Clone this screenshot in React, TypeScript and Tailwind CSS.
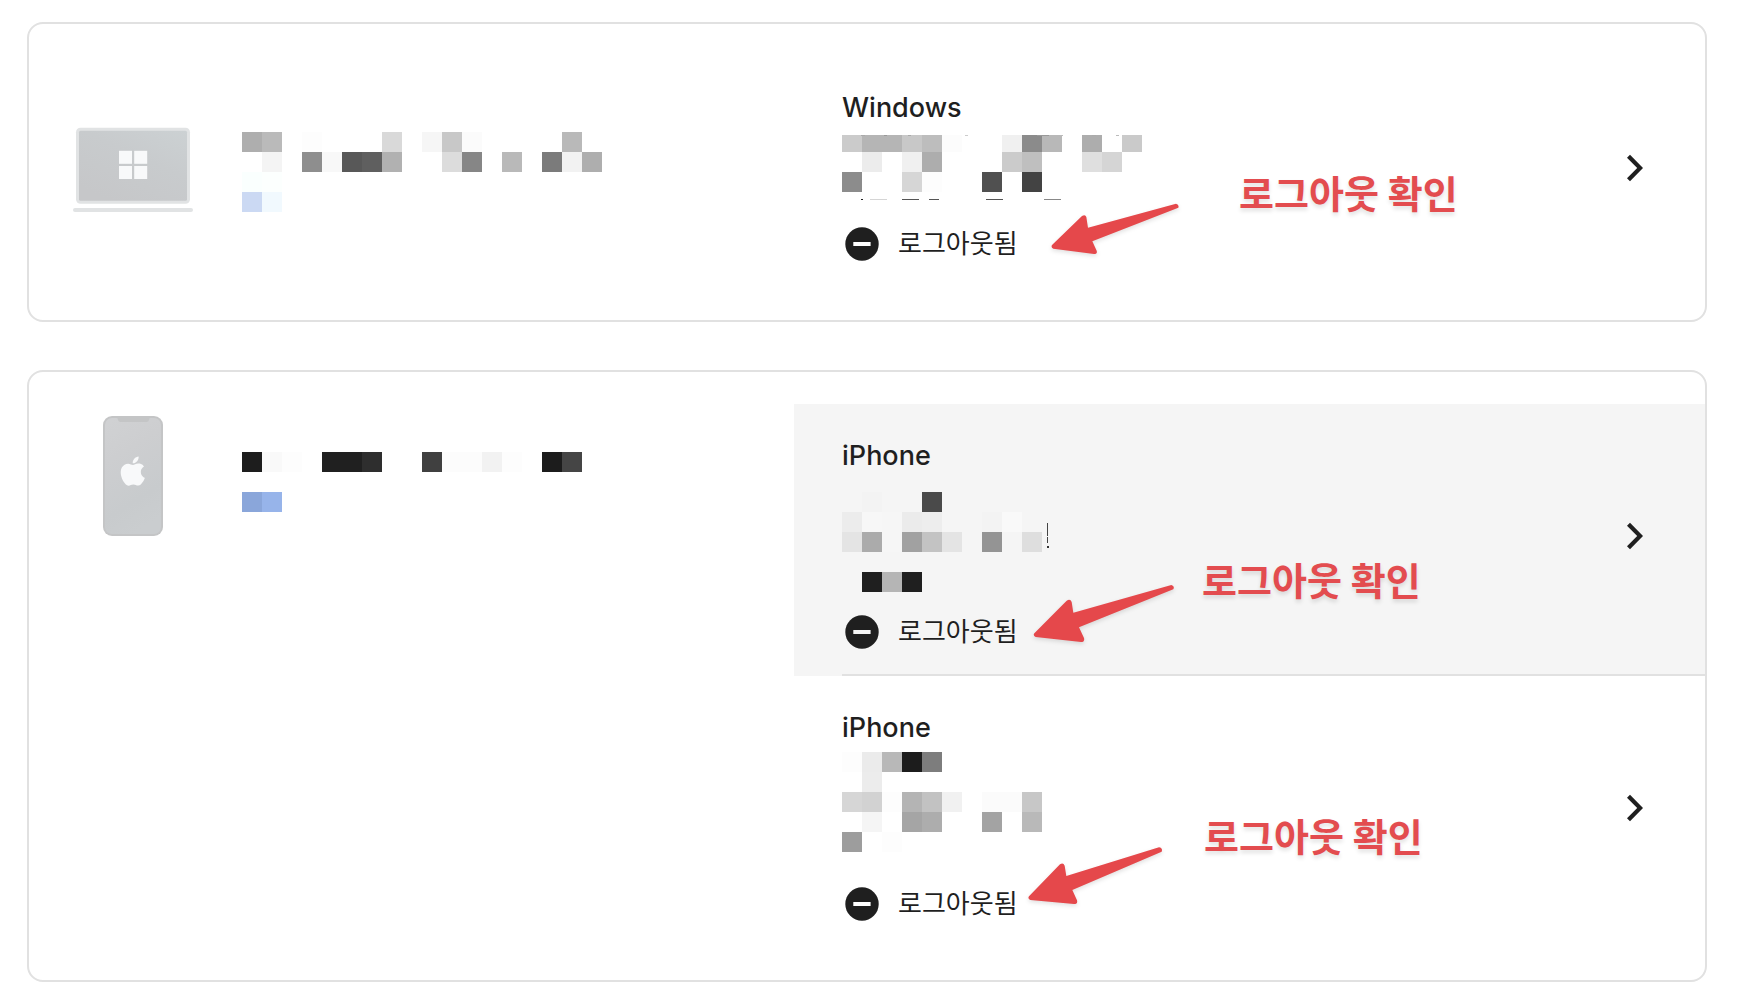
type Cell = [col: number, row: number, color: string];
type Mark = [x: number, y: number, width: number, height: number, color: string];

interface MosaicProps {
  label: string;
  cells: Cell[];
  marks?: Mark[];
  top: number;
  width: number;
  height: number;
}

interface Session {
  name: string;
  active: boolean;
  divider: boolean;
  mosaic: MosaicProps;
  arrow: { className: string; viewBox: string; width: number; height: number; path: string };
  noteClass: string;
}

const CELL = 20;

const windowsDevice: Cell[] = [
  [0, 0, "#aeaeae"], [1, 0, "#bababa"], [3, 0, "#fdfdfd"], [7, 0, "#d9d9d9"], [9, 0, "#f6f6f6"],
  [10, 0, "#c8c8c8"], [11, 0, "#fbfbfb"], [16, 0, "#b9b9b9"],
  [1, 1, "#f4f4f4"], [3, 1, "#8e8e8e"], [4, 1, "#f8f8f8"], [5, 1, "#585858"], [6, 1, "#5f5f5f"],
  [7, 1, "#b1b1b1"], [10, 1, "#dcdcdc"], [11, 1, "#868686"], [13, 1, "#b9b9b9"], [15, 1, "#7b7b7b"],
  [16, 1, "#f2f2f2"], [17, 1, "#aeaeae"],
  [0, 2, "#fafffe"], [1, 2, "#fcfffe"],
  [0, 3, "#cbd9f3"], [1, 3, "#f1f9fe"],
];

const phoneDevice: Cell[] = [
  [0, 0, "#1d1d1d"], [1, 0, "#f9f9f9"], [2, 0, "#fdfdfd"], [4, 0, "#202020"], [5, 0, "#202020"],
  [6, 0, "#2e2e2e"], [9, 0, "#404040"], [10, 0, "#fcfcfc"], [11, 0, "#fcfcfc"], [12, 0, "#f2f2f2"],
  [13, 0, "#fdfdfd"], [15, 0, "#1c1c1c"], [16, 0, "#454545"],
  [0, 2, "#8aa6da"], [1, 2, "#97b4ea"],
];

const windowsSessions: Session[] = [
  {
    name: "Windows",
    active: false,
    divider: false,
    mosaic: {
      label: "세션 정보",
      top: 6,
      width: 320,
      height: 98,
      cells: [
        [0, 0, "#cbcbcb"], [1, 0, "#b5b5b5"], [2, 0, "#b5b5b5"], [3, 0, "#c8c8c8"], [4, 0, "#bdbdbd"],
        [5, 0, "#fcfcfc"], [8, 0, "#f0f0f0"], [9, 0, "#8b8b8b"], [10, 0, "#b8b8b8"], [12, 0, "#adadad"],
        [14, 0, "#cacaca"],
        [1, 1, "#ececec"], [3, 1, "#f0f0f0"], [4, 1, "#adadad"], [8, 1, "#cbcbcb"], [9, 1, "#bfbfbf"],
        [12, 1, "#dfdfdf"], [13, 1, "#d5d5d5"],
        [0, 2, "#8c8c8c"], [3, 2, "#d6d6d6"], [4, 2, "#fdfdfd"], [7, 2, "#505050"], [9, 2, "#434343"],
      ],
      marks: [
        [0, 0, 320, 3, "#ffffff"],
        [19, 3, 4, 1, "#aaaaaa"], [42, 3, 3, 1, "#999999"], [66, 3, 3, 1, "#aaaaaa"],
        [123, 3, 3, 1, "#cccccc"], [195, 3, 12, 1, "#999999"], [218, 3, 3, 1, "#bbbbbb"],
        [250, 3, 4, 1, "#aaaaaa"], [274, 3, 3, 1, "#bbbbbb"],
        [19, 67, 2, 1, "#222222"], [28, 67, 17, 1, "#d5d5d5"], [60, 67, 17, 1, "#555555"],
        [87, 67, 10, 1, "#555555"], [144, 67, 17, 1, "#555555"], [202, 67, 17, 1, "#888888"],
      ],
    },
    arrow: {
      className: "absolute left-[253px] top-[144px]",
      viewBox: "681 360 408 180",
      width: 136,
      height: 60,
      path: "M696 495L786 408Q796 402 799 411L804 443L1068 371Q1078 373 1075 383L817 484L830 512Q833 522 822 522L700 506Q692 502 696 495Z",
    },
    noteClass: "left-[445px] top-[110px]",
  },
];

const phoneSessions: Session[] = [
  {
    name: "iPhone",
    active: true,
    divider: true,
    mosaic: {
      label: "세션 정보",
      top: 18,
      width: 320,
      height: 138,
      cells: [
        [1, 0, "#f3f3f3"], [4, 0, "#4a4a4a"],
        [0, 1, "#ececec"], [1, 1, "#f7f7f7"], [2, 1, "#f6f6f6"], [3, 1, "#ebebeb"], [4, 1, "#ededed"],
        [7, 1, "#f3f3f3"], [8, 1, "#f9f9f9"],
        [0, 2, "#e4e4e4"], [1, 2, "#ababab"], [2, 2, "#f6f6f6"], [3, 2, "#a1a1a1"], [4, 2, "#c3c3c3"],
        [5, 2, "#e4e4e4"], [7, 2, "#949494"], [9, 2, "#dedede"],
        [1, 4, "#1f1f1f"], [2, 4, "#b5b5b5"], [3, 4, "#1f1f1f"],
      ],
      marks: [
        [205, 31, 1, 13, "#444444"], [205, 45, 1, 6, "#444444"], [205, 54, 2, 2, "#333333"],
      ],
    },
    arrow: {
      className: "absolute left-[236px] top-[176px]",
      viewBox: "750 570 444 204",
      width: 148,
      height: 68,
      path: "M763 730L860 632Q871 625 875 636L880 668L1174 585Q1185 588 1180 598L897 712L912 744Q915 756 903 756L767 741Q758 737 763 730Z",
    },
    noteClass: "left-[408px] top-[149px]",
  },
  {
    name: "iPhone",
    active: false,
    divider: false,
    mosaic: {
      label: "세션 정보",
      top: 6,
      width: 320,
      height: 138,
      cells: [
        [0, 0, "#fdfdfd"], [1, 0, "#ebebeb"], [2, 0, "#b8b8b8"], [3, 0, "#1c1c1c"], [4, 0, "#7d7d7d"],
        [1, 1, "#ececec"],
        [0, 2, "#d6d6d6"], [1, 2, "#d2d2d2"], [2, 2, "#fdfdfd"], [3, 2, "#b4b4b4"], [4, 2, "#c2c2c2"],
        [5, 2, "#f1f1f1"], [7, 2, "#fbfbfb"], [8, 2, "#fbfbfb"], [9, 2, "#c7c7c7"],
        [1, 3, "#f5f5f5"], [3, 3, "#a5a5a5"], [4, 3, "#adadad"], [7, 3, "#a3a3a3"], [9, 3, "#b9b9b9"],
        [0, 4, "#9d9d9d"], [2, 4, "#fdfdfd"],
      ],
    },
    arrow: {
      className: "absolute left-[231px] top-[169px]",
      viewBox: "615 465 420 189",
      width: 140,
      height: 63,
      path: "M627 619L720 523Q730 517 734 527L739 558L1017 472Q1029 474 1025 485L757 600L771 631Q774 642 762 642L631 630Q622 626 627 619Z",
    },
    noteClass: "left-[410px] top-[133px]",
  },
];

function Mosaic({ label, cells, marks = [], top, width, height }: MosaicProps) {
  return (
    <svg
      role="img"
      aria-label={label}
      width={width}
      height={height}
      shapeRendering="crispEdges"
      className="block shrink-0"
    >
      {cells.map(([col, row, color]) => (
        <rect key={`${col}-${row}`} x={col * CELL} y={top + row * CELL} width={CELL} height={CELL} fill={color} />
      ))}
      {marks.map(([x, y, w, h, color], i) => (
        <rect key={i} x={x} y={y + top} width={w} height={h} fill={color} />
      ))}
    </svg>
  );
}

function LaptopIcon() {
  return (
    <svg width="120" height="120" viewBox="0 0 120 120" className="block shrink-0" aria-hidden="true">
      <defs>
        <linearGradient id="laptop" x1="1" y1="0" x2="0.3" y2="1">
          <stop offset="0" stopColor="#ccd1d3" />
          <stop offset="0.45" stopColor="#c8cbcd" />
          <stop offset="1" stopColor="#c6c7c9" />
        </linearGradient>
      </defs>
      <rect x="3" y="15.7" width="114" height="76" rx="4.5" fill="#e1e3e4" />
      <rect x="6" y="18.7" width="108" height="70" rx="1.5" fill="url(#laptop)" />
      <rect x="0" y="96" width="120" height="4" rx="2" fill="#e1e3e4" />
      <g fill="#f8f9fa">
        <rect x="46" y="38.8" width="13" height="13" />
        <rect x="61.2" y="38.8" width="13" height="13" />
        <rect x="46" y="54" width="13" height="13" />
        <rect x="61.2" y="54" width="13" height="13" />
      </g>
    </svg>
  );
}

function PhoneIcon() {
  return (
    <svg width="120" height="120" viewBox="0 0 120 120" className="block shrink-0" aria-hidden="true">
      <defs>
        <linearGradient id="phone" x1="0.2" y1="0" x2="0.5" y2="1">
          <stop offset="0" stopColor="#d0d1d3" />
          <stop offset="0.3" stopColor="#cdced0" />
          <stop offset="0.75" stopColor="#c8cbcd" />
          <stop offset="1" stopColor="#cacdcf" />
        </linearGradient>
      </defs>
      <rect x="30" y="0" width="60" height="120" rx="9" fill="#c4c5c6" />
      <rect x="32" y="2" width="56" height="116" rx="7" fill="url(#phone)" />
      <path d="M44 1H77L76 4Q75.5 6 73.5 6H47.5Q45.5 6 45 4Z" fill="#c4c5c6" />
      <path
        transform="translate(45 40.6) scale(1.23 1.21)"
        fill="#f8f9fa"
        d="M12.152 6.896c-.948 0-2.415-1.078-3.96-1.04-2.04.027-3.91 1.183-4.961 3.014-2.117 3.675-.546 9.103 1.519 12.09 1.013 1.454 2.208 3.09 3.792 3.039 1.52-.065 2.09-.987 3.935-.987 1.831 0 2.35.987 3.96.948 1.637-.026 2.676-1.48 3.676-2.948 1.156-1.688 1.636-3.325 1.662-3.415-.039-.013-3.182-1.221-3.22-4.857-.026-3.04 2.48-4.494 2.597-4.559-1.429-2.09-3.623-2.324-4.39-2.376-2-.156-3.675 1.09-4.61 1.09zM15.53 3.83c.843-1.012 1.4-2.427 1.245-3.83-1.207.052-2.662.805-3.532 1.818-.78.896-1.454 2.338-1.273 3.714 1.338.104 2.715-.688 3.559-1.701"
      />
    </svg>
  );
}

function SessionRow({ session }: { session: Session }) {
  const { name, active, divider, mosaic, arrow, noteClass } = session;

  return (
    <li className={active ? "relative bg-[#f5f5f5] pl-12" : "relative pl-12"}>
      <a
        href="#"
        className={
          divider
            ? "flex items-center justify-between border-b-2 border-[#e1e1e1]"
            : "flex items-center justify-between border-b-2 border-transparent"
        }
      >
        <div className="pt-[34px] pb-[22px]">
          <h2 className="text-[27px] leading-9 font-medium">{name}</h2>
          <Mosaic {...mosaic} />
          <p className="flex h-10 items-center gap-4 text-[26px] leading-10">
            <svg width="40" height="40" viewBox="0 0 40 40" aria-hidden="true">
              <circle cx="20" cy="20" r="16.7" fill="#1f1f1f" />
              <rect x="11.3" y="18" width="17.3" height="4" fill={active ? "#f5f5f5" : "#ffffff"} />
            </svg>
            로그아웃됨
          </p>
        </div>
        <svg width="16" height="28" viewBox="0 0 16 28" className="mr-[62px] mb-[6px] shrink-0" aria-hidden="true">
          <path d="M3 0.7L16 14L3 27.3L0 24.3L10.2 14L0 3.7Z" fill="#1f1f1f" />
        </svg>
      </a>

      {/* annotation drawn over the row */}
      <svg
        className={arrow.className}
        width={arrow.width}
        height={arrow.height}
        viewBox={arrow.viewBox}
        aria-hidden="true"
        overflow="visible"
      >
        <path d={arrow.path} fill="#e5484b" className="drop-shadow-[0_6px_6px_rgba(0,0,0,0.12)]" />
      </svg>
      <strong
        className={`absolute text-[38px] leading-14 font-bold whitespace-nowrap text-[#e34c4f] [text-shadow:0_3px_4px_rgba(0,0,0,0.12)] ${noteClass}`}
      >
        로그아웃 확인
      </strong>
    </li>
  );
}

export default function App() {
  return (
    <main className="flex flex-col gap-12 bg-white pt-[22px] pr-[31px] pb-[18px] pl-[27px] font-['Inter','Noto_Sans_CJK_KR',sans-serif] text-[#1f1f1f]">
      <section className="grid grid-cols-[765fr_911fr] rounded-2xl border-2 border-[#e1e1e1] py-8">
        <div className="flex items-center gap-[49px] pl-11">
          <LaptopIcon />
          <Mosaic label="기기 이름" cells={windowsDevice} top={20} width={360} height={120} />
        </div>
        <ul>
          {windowsSessions.map((s, i) => <SessionRow key={i} session={s} />)}
        </ul>
      </section>

      <section className="grid grid-cols-[765fr_911fr] rounded-2xl border-2 border-[#e1e1e1] py-8">
        <div className="flex items-start gap-[49px] pt-3 pl-11">
          <PhoneIcon />
          <Mosaic label="기기 이름" cells={phoneDevice} top={36} width={360} height={120} />
        </div>
        <ul>
          {phoneSessions.map((s, i) => <SessionRow key={i} session={s} />)}
        </ul>
      </section>
    </main>
  );
}
